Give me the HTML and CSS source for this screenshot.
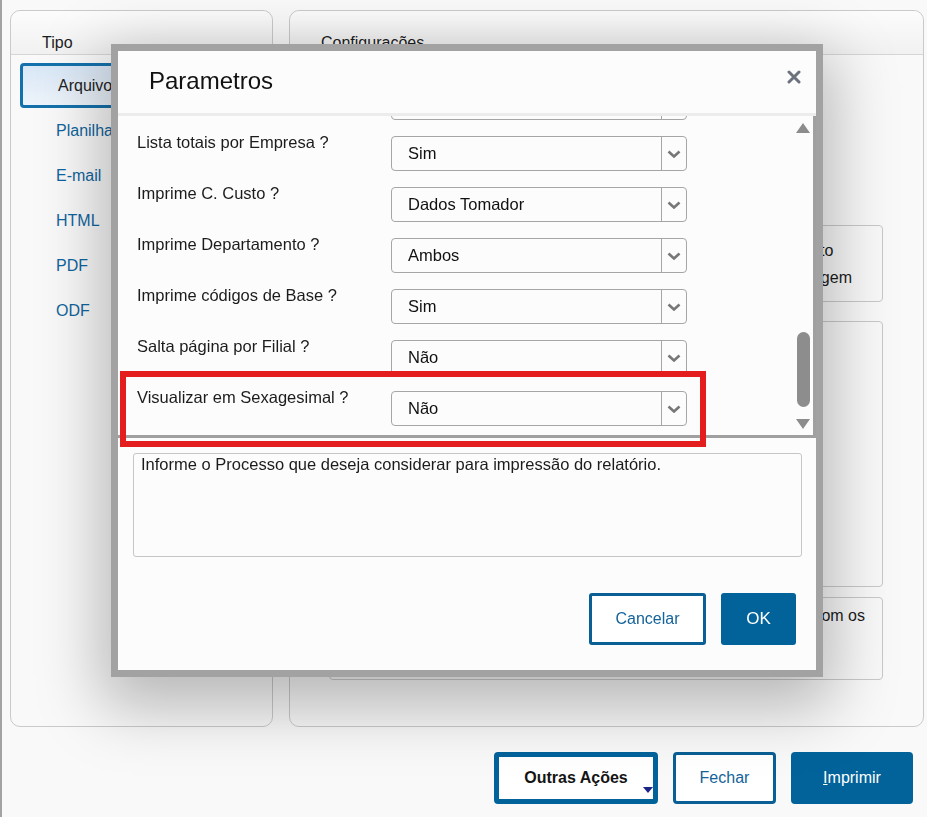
FILE: index.html
```html
<!DOCTYPE html>
<html lang="pt-BR">
<head>
    <meta charset="UTF-8">
    <meta name="viewport" content="width=device-width, initial-scale=1.0">
    <title>Impressão</title>
    <link rel="stylesheet" href="styles.css">
</head>
<body>
    <div class="page">
        <div class="panels">
            <div class="panel panel-type">
                <div class="panel-header">Tipo</div>
                <ul class="type-list">
                    <li class="type-item selected">Arquivo</li>
                    <li class="type-item">Planilha</li>
                    <li class="type-item">E-mail</li>
                    <li class="type-item">HTML</li>
                    <li class="type-item">PDF</li>
                    <li class="type-item">ODF</li>
                </ul>
            </div>

            <div class="panel panel-config">
                <div class="panel-header">Configurações</div>
                <div class="config-body">
                    <div class="group group-orientation">
                        <div class="options">
                            <label class="option"><span class="radio checked"></span>Retrato</label>
                            <label class="option"><span class="radio"></span>Paisagem</label>
                        </div>
                    </div>
                    <div class="group group-preview"></div>
                    <div class="group group-notes">
                        <p>Gera o arquivo em disco com os</p>
                    </div>
                </div>
            </div>
        </div>

        <div class="actions">
            <button type="button" class="btn btn-more">Outras Ações<span class="caret"></span></button>
            <button type="button" class="btn btn-outline">Fechar</button>
            <button type="button" class="btn btn-primary"><u>I</u>mprimir</button>
        </div>
    </div>

    <div class="modal">
        <div class="modal-header">
            <h1 class="modal-title">Parametros</h1>
            <button type="button" class="modal-close">
                <svg width="14" height="14" viewBox="0 0 14 14">
                    <path d="M2 2 L12 12 M12 2 L2 12" stroke="#6c727d" stroke-width="3" stroke-linecap="round"/>
                </svg>
            </button>
        </div>

        <div class="modal-body">
            <div class="param-list">
                <div class="param-row">
                    <div class="param-label">Imprime Filial ?</div>
                    <div class="select"><span class="select-value">Sim</span><span class="select-arrow"></span></div>
                </div>
                <div class="param-row">
                    <div class="param-label">Lista totais por Empresa ?</div>
                    <div class="select"><span class="select-value">Sim</span><span class="select-arrow"></span></div>
                </div>
                <div class="param-row">
                    <div class="param-label">Imprime C. Custo ?</div>
                    <div class="select"><span class="select-value">Dados Tomador</span><span class="select-arrow"></span></div>
                </div>
                <div class="param-row">
                    <div class="param-label">Imprime Departamento ?</div>
                    <div class="select"><span class="select-value">Ambos</span><span class="select-arrow"></span></div>
                </div>
                <div class="param-row">
                    <div class="param-label">Imprime códigos de Base ?</div>
                    <div class="select"><span class="select-value">Sim</span><span class="select-arrow"></span></div>
                </div>
                <div class="param-row">
                    <div class="param-label">Salta página por Filial ?</div>
                    <div class="select"><span class="select-value">Não</span><span class="select-arrow"></span></div>
                </div>
                <div class="param-row">
                    <div class="param-label">Visualizar em Sexagesimal ?</div>
                    <div class="select"><span class="select-value">Não</span><span class="select-arrow"></span></div>
                </div>
            </div>

            <div class="scrollbar">
                <span class="scroll-up"></span>
                <div class="scroll-track"><span class="scroll-thumb"></span></div>
                <span class="scroll-down"></span>
            </div>
        </div>

        <div class="param-help">Informe o Processo que deseja considerar para impressão do relatório.</div>

        <div class="modal-footer">
            <button type="button" class="btn btn-outline btn-cancel">Cancelar</button>
            <button type="button" class="btn btn-primary btn-ok">OK</button>
        </div>

        <div class="highlight"></div>
    </div>
</body>
</html>
```

FILE: styles.css
```css
* {
    box-sizing: border-box;
}
body {
    margin: 0;
    background-color: #f9f9f9;
    font-family: 'Liberation Sans', Arial, sans-serif;
    font-size: 16px;
    color: #1c1c1c;
}
.page {
    height: 100vh;
    border-left: 2px solid #a3a3a3;
    padding: 10px 14px 0 8px;
}
.panels {
    display: flex;
    gap: 16px;
    height: 717px;
    margin-right: -11px;
}
.panel {
    border: 1px solid #cacaca;
    border-radius: 10px;
    display: flex;
    flex-direction: column;
}
.panel-type {
    width: 263px;
}
.panel-config {
    flex: 1;
}
.panel-header {
    height: 44px;
    padding: 0 0 2px 31px;
    display: flex;
    align-items: flex-end;
    border-bottom: 1px solid #d6d6d6;
    border-radius: 10px 10px 0 0;
    background: linear-gradient(#fcfcfc, #f1f1f1);
}

/* tipo de saída */
.type-list {
    list-style: none;
    margin: 0;
    padding: 8px 9px 0 9px;
}
.type-item {
    height: 45px;
    display: flex;
    align-items: center;
    padding-left: 33px;
    border: 3px solid transparent;
    border-radius: 4px;
    color: #10659e;
}
.type-item.selected {
    padding-left: 35px;
    border-color: #1471ab;
    color: #222;
    background: linear-gradient(#d9e7f6, #eef4fb);
}

/* configurações */
.config-body {
    padding: 170px 40px 0 39px;
}
.group {
    border: 1px solid #c9c9c9;
    border-radius: 4px;
}
.group-orientation {
    display: flex;
    justify-content: flex-end;
    padding: 11px 30px 10px 0;
}
.option {
    display: flex;
    align-items: center;
    height: 27px;
}
.radio {
    width: 14px;
    height: 14px;
    border: 1px solid #888;
    border-radius: 50%;
    margin-right: 8px;
}
.group-preview {
    height: 266px;
    margin-top: 19px;
}
.group-notes {
    height: 83px;
    margin-top: 10px;
    padding: 9px 17px 0 0;
    text-align: right;
}
.group-notes p {
    margin: 0;
}

/* botões */
.actions {
    display: flex;
    justify-content: flex-end;
    gap: 15px;
    margin-top: 25px;
}
.btn {
    height: 52px;
    border-radius: 4px;
    font-family: inherit;
    font-size: 16px;
    cursor: pointer;
}
.btn-more {
    position: relative;
    width: 164px;
    border: 5px solid #02639b;
    background-color: #fff;
    color: #141414;
    font-weight: bold;
}
.caret {
    position: absolute;
    right: 0;
    bottom: 6px;
    border-left: 5px solid transparent;
    border-right: 5px solid transparent;
    border-top: 6px solid #1b2486;
}
.btn-outline {
    width: 103px;
    border: 3px solid #0a5f94;
    background-color: #fff;
    color: #14639a;
}
.btn-primary {
    width: 122px;
    border: none;
    background-color: #02639b;
    color: #fff;
}

/* janela de parâmetros */
.modal {
    position: fixed;
    left: 111px;
    top: 44px;
    width: 712px;
    height: 633px;
    border: 7px solid #a2a2a2;
    background-color: #fcfcfc;
    font-size: 16.5px;
    box-shadow: 0 20px 60px 10px rgba(0, 0, 0, 0.27);
}
.modal-header {
    height: 65px;
    display: flex;
    align-items: flex-start;
    justify-content: space-between;
    padding: 16px 15px 0 31px;
    border-bottom: 3px solid #ececec;
}
.modal-title {
    margin: 0;
    font-size: 24px;
    font-weight: normal;
    color: #111;
}
.modal-close {
    border: none;
    background: none;
    padding: 0;
    margin-top: 3px;
    width: 14px;
    height: 14px;
    cursor: pointer;
}
.modal-body {
    height: 322px;
    display: flex;
    overflow: hidden;
    border-right: 3px solid #a0a0a0;
    border-bottom: 3px solid #a0a0a0;
}
.param-list {
    flex: 1;
    margin-top: -39px;
}
.param-row {
    height: 51px;
    display: flex;
    align-items: flex-start;
    padding-left: 19px;
}
.param-label {
    width: 254px;
    margin-top: 5px;
}
.select {
    width: 296px;
    height: 35px;
    margin-top: 8px;
    display: flex;
    border: 1px solid #a6a6a6;
    border-radius: 4px;
    background-color: #fcfcfc;
}
.select-value {
    flex: 1;
    display: flex;
    align-items: center;
    padding-left: 16px;
    color: #111;
}
.select-arrow {
    width: 25px;
    border-left: 1px solid #a6a6a6;
    background: url("data:image/svg+xml,%3Csvg xmlns='http://www.w3.org/2000/svg' width='14' height='8' viewBox='0 0 14 8'%3E%3Cpath d='M1.5 1.5 L7 6.5 L12.5 1.5' fill='none' stroke='%23777' stroke-width='2.6'/%3E%3C/svg%3E") no-repeat center;
}
.scrollbar {
    width: 20px;
    display: flex;
    flex-direction: column;
    align-items: center;
    padding: 7px 0 6px;
}
.scroll-up,
.scroll-down {
    width: 0;
    height: 0;
    border-left: 7px solid transparent;
    border-right: 7px solid transparent;
}
.scroll-up {
    border-bottom: 10px solid #8c8c8c;
}
.scroll-down {
    border-top: 10px solid #8c8c8c;
}
.scroll-track {
    flex: 1;
    width: 13px;
}
.scroll-thumb {
    display: block;
    width: 13px;
    height: 75px;
    margin-top: 199px;
    border-radius: 7px;
    background-color: #8d8d8d;
}
.param-help {
    height: 104px;
    margin: 15px 14px 0 15px;
    padding: 1px 7px;
    border: 1px solid #c6c6c6;
    border-radius: 3px;
    color: #1c1c1c;
}
.modal-footer {
    display: flex;
    justify-content: flex-end;
    gap: 15px;
    padding: 36px 20px 0 0;
}
.btn-cancel {
    width: 117px;
    border-radius: 3px;
}
.btn-ok {
    width: 75px;
    font-size: 17px;
    border-radius: 3px;
}
.highlight {
    position: absolute;
    left: 2px;
    top: 320px;
    width: 586px;
    height: 76px;
    border: 6px solid #e41d1f;
}
```
